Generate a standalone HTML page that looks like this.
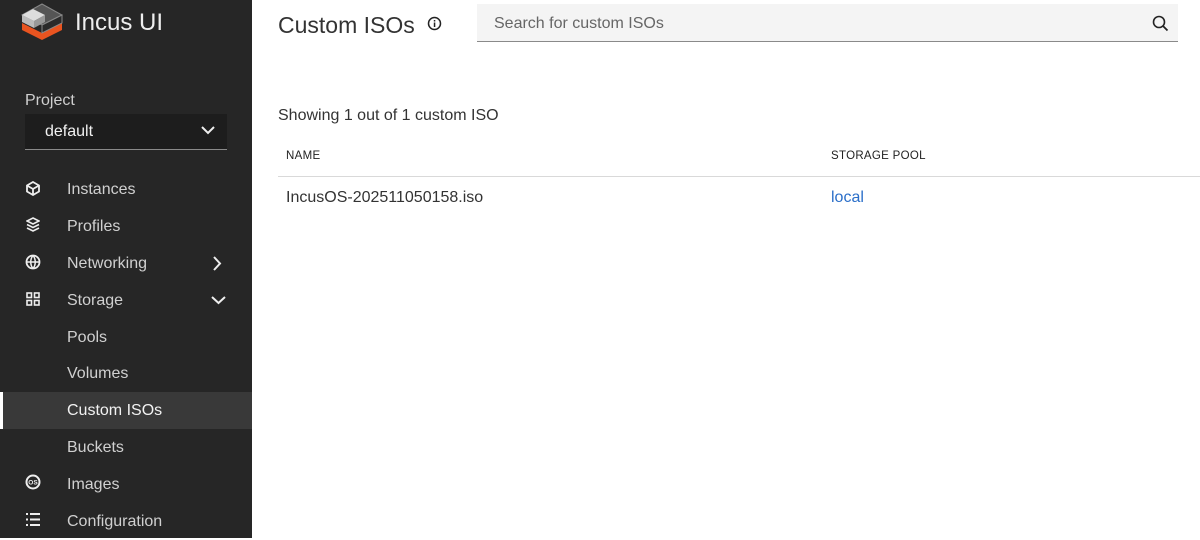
<!DOCTYPE html>
<html><head><meta charset="utf-8"><style>
*{margin:0;padding:0;box-sizing:border-box}
body{width:1200px;height:538px;overflow:hidden;background:#fff;font-family:"Liberation Sans",sans-serif;position:relative}
.side{position:absolute;left:0;top:0;width:252px;height:538px;background:#262626;color:#d9d9d9}
.logo{position:absolute;left:21px;top:2px}
.brand{position:absolute;left:75px;top:9px;font-size:24px;color:#eee;font-weight:300}
.plabel{position:absolute;left:25px;top:92px;font-size:16px;color:#cfcfcf}
.sel{position:absolute;left:25px;top:114px;width:202px;height:36px;background:#1d1d1d;border-bottom:1px solid #8a8a8a;color:#f2f2f2;font-size:16px;padding:9px 0 0 20px}
.item{position:absolute;left:0;width:252px;height:37px;font-size:16px;color:#d0d0d0}
.item span{position:absolute;left:67px;top:10px}
.item svg{position:absolute}
.active{background:#393939;border-left:3px solid #fff}
.active span{color:#f2f2f2}
.title{position:absolute;left:278px;top:12px;font-size:23px;color:#333;font-weight:300}
.search{position:absolute;left:477px;top:4px;width:701px;height:38px;background:#f4f4f4;border-bottom:1px solid #8a8a8a;font-size:16px;color:#666;padding:11px 0 0 17px}
.t{position:absolute;color:#222}
</style></head><body>
<div class="side">
<svg class="logo" width="42" height="38" viewBox="0 0 42 38">
<polygon points="1,21 21,31 41,21 41,28 21,38 1,28" fill="#e95420"/>
<polygon points="1,13 21,2 41,13 21,23" fill="#555" stroke="#888" stroke-width="1"/>
<polygon points="1,13 12,7 24,13 13,19" fill="#ddd"/>
<polygon points="1,13 13,19 13,26 1,20" fill="#bbb"/>
<polygon points="13,19 24,13 24,20 13,26" fill="#999"/>
<polygon points="21,23 41,13 41,21 21,31" fill="#2a2a2a" stroke="#888" stroke-width="1"/>
</svg>
<div class="brand">Incus UI</div>
<div class="plabel">Project</div>
<div class="sel">default<svg style="position:absolute;right:12px;top:12px" width="14" height="9" viewBox="0 0 14 9"><path d="M1 1l6 6 6-6" stroke="#eee" stroke-width="2" fill="none"/></svg></div>

<div class="item" style="top:171px"><svg style="left:26px;top:10px" width="14" height="15" viewBox="0 0 14 15"><path d="M7 1L13 4.5V10.5L7 14L1 10.5V4.5Z M1 4.5L7 8L13 4.5 M7 8V14" stroke="#eee" stroke-width="1.8" fill="none"/></svg><span>Instances</span></div>
<div class="item" style="top:208px"><svg style="left:26px;top:9px" width="14" height="15" viewBox="0 0 14 15"><path d="M7 1L13 4L7 7L1 4Z M1 7.5L7 10.5L13 7.5 M1 11L7 14L13 11" stroke="#eee" stroke-width="1.6" fill="none"/></svg><span>Profiles</span></div>
<div class="item" style="top:245px"><svg style="left:25px;top:9px" width="16" height="16" viewBox="0 0 16 16"><circle cx="8" cy="8" r="6.5" stroke="#eee" stroke-width="1.8" fill="none"/><path d="M1.5 8H14.5 M8 1.5C5 5 5 11 8 14.5 M8 1.5C11 5 11 11 8 14.5" stroke="#eee" stroke-width="1.5" fill="none"/></svg><span>Networking</span><svg style="left:213px;top:11px" width="9" height="15" viewBox="0 0 9 15"><path d="M1 1l6 6.5-6 6.5" stroke="#eee" stroke-width="2" fill="none"/></svg></div>
<div class="item" style="top:282px"><svg style="left:26px;top:10px" width="14" height="14" viewBox="0 0 14 14"><g stroke="#eee" stroke-width="1.6" fill="none"><rect x="1" y="1" width="4.5" height="4.5"/><rect x="8.5" y="1" width="4.5" height="4.5"/><rect x="1" y="8.5" width="4.5" height="4.5"/><rect x="8.5" y="8.5" width="4.5" height="4.5"/></g></svg><span>Storage</span><svg style="left:211px;top:14px" width="15" height="9" viewBox="0 0 15 9"><path d="M1 1l6.5 6 6.5-6" stroke="#eee" stroke-width="2" fill="none"/></svg></div>
<div class="item" style="top:319px"><span>Pools</span></div>
<div class="item" style="top:355px"><span>Volumes</span></div>
<div class="item active" style="top:392px"><span style="left:64px">Custom ISOs</span></div>
<div class="item" style="top:429px"><span>Buckets</span></div>
<div class="item" style="top:466px"><svg style="left:25px;top:8px" width="16" height="16" viewBox="0 0 16 16"><circle cx="8" cy="8" r="6.5" stroke="#eee" stroke-width="2" fill="none"/><text x="8" y="10.5" font-size="6.5" font-weight="bold" fill="#eee" text-anchor="middle" font-family="Liberation Sans">OS</text></svg><span>Images</span></div>
<div class="item" style="top:503px"><svg style="left:26px;top:10px" width="14" height="13" viewBox="0 0 14 13"><g fill="#eee"><rect x="0" y="0" width="2" height="2"/><rect x="4" y="0" width="10" height="2"/><rect x="0" y="5.5" width="2" height="2"/><rect x="4" y="5.5" width="10" height="2"/><rect x="0" y="11" width="2" height="2"/><rect x="4" y="11" width="10" height="2"/></g></svg><span>Configuration</span></div>
</div>

<div class="title">Custom ISOs</div>
<svg style="position:absolute;left:427px;top:16px" width="15" height="15" viewBox="0 0 15 15"><circle cx="7.5" cy="7.5" r="6" stroke="#222" stroke-width="1.5" fill="none"/><rect x="6.8" y="6.5" width="1.5" height="4.5" fill="#222"/><rect x="6.8" y="4" width="1.5" height="1.5" fill="#222"/></svg>
<div class="search">Search for custom ISOs<svg style="position:absolute;left:675px;top:11px" width="17" height="17" viewBox="0 0 17 17"><circle cx="7" cy="7" r="5.5" stroke="#222" stroke-width="1.6" fill="none"/><path d="M11 11L15.5 15.5" stroke="#222" stroke-width="1.8"/></svg></div>

<div class="t" style="left:278px;top:107px;font-size:16px;color:#333">Showing 1 out of 1 custom ISO</div>
<div class="t" style="left:286px;top:150px;font-size:11.5px;letter-spacing:.3px">NAME</div>
<div class="t" style="left:831px;top:150px;font-size:11.5px;letter-spacing:.3px">STORAGE POOL</div>
<div style="position:absolute;left:278px;top:176px;width:922px;height:1px;background:#d9d9d9"></div>
<div class="t" style="left:286px;top:189px;font-size:16px;color:#333">IncusOS-202511050158.iso</div>
<div class="t" style="left:831px;top:189px;font-size:16px;color:#2b6fc9">local</div>
</body></html>
